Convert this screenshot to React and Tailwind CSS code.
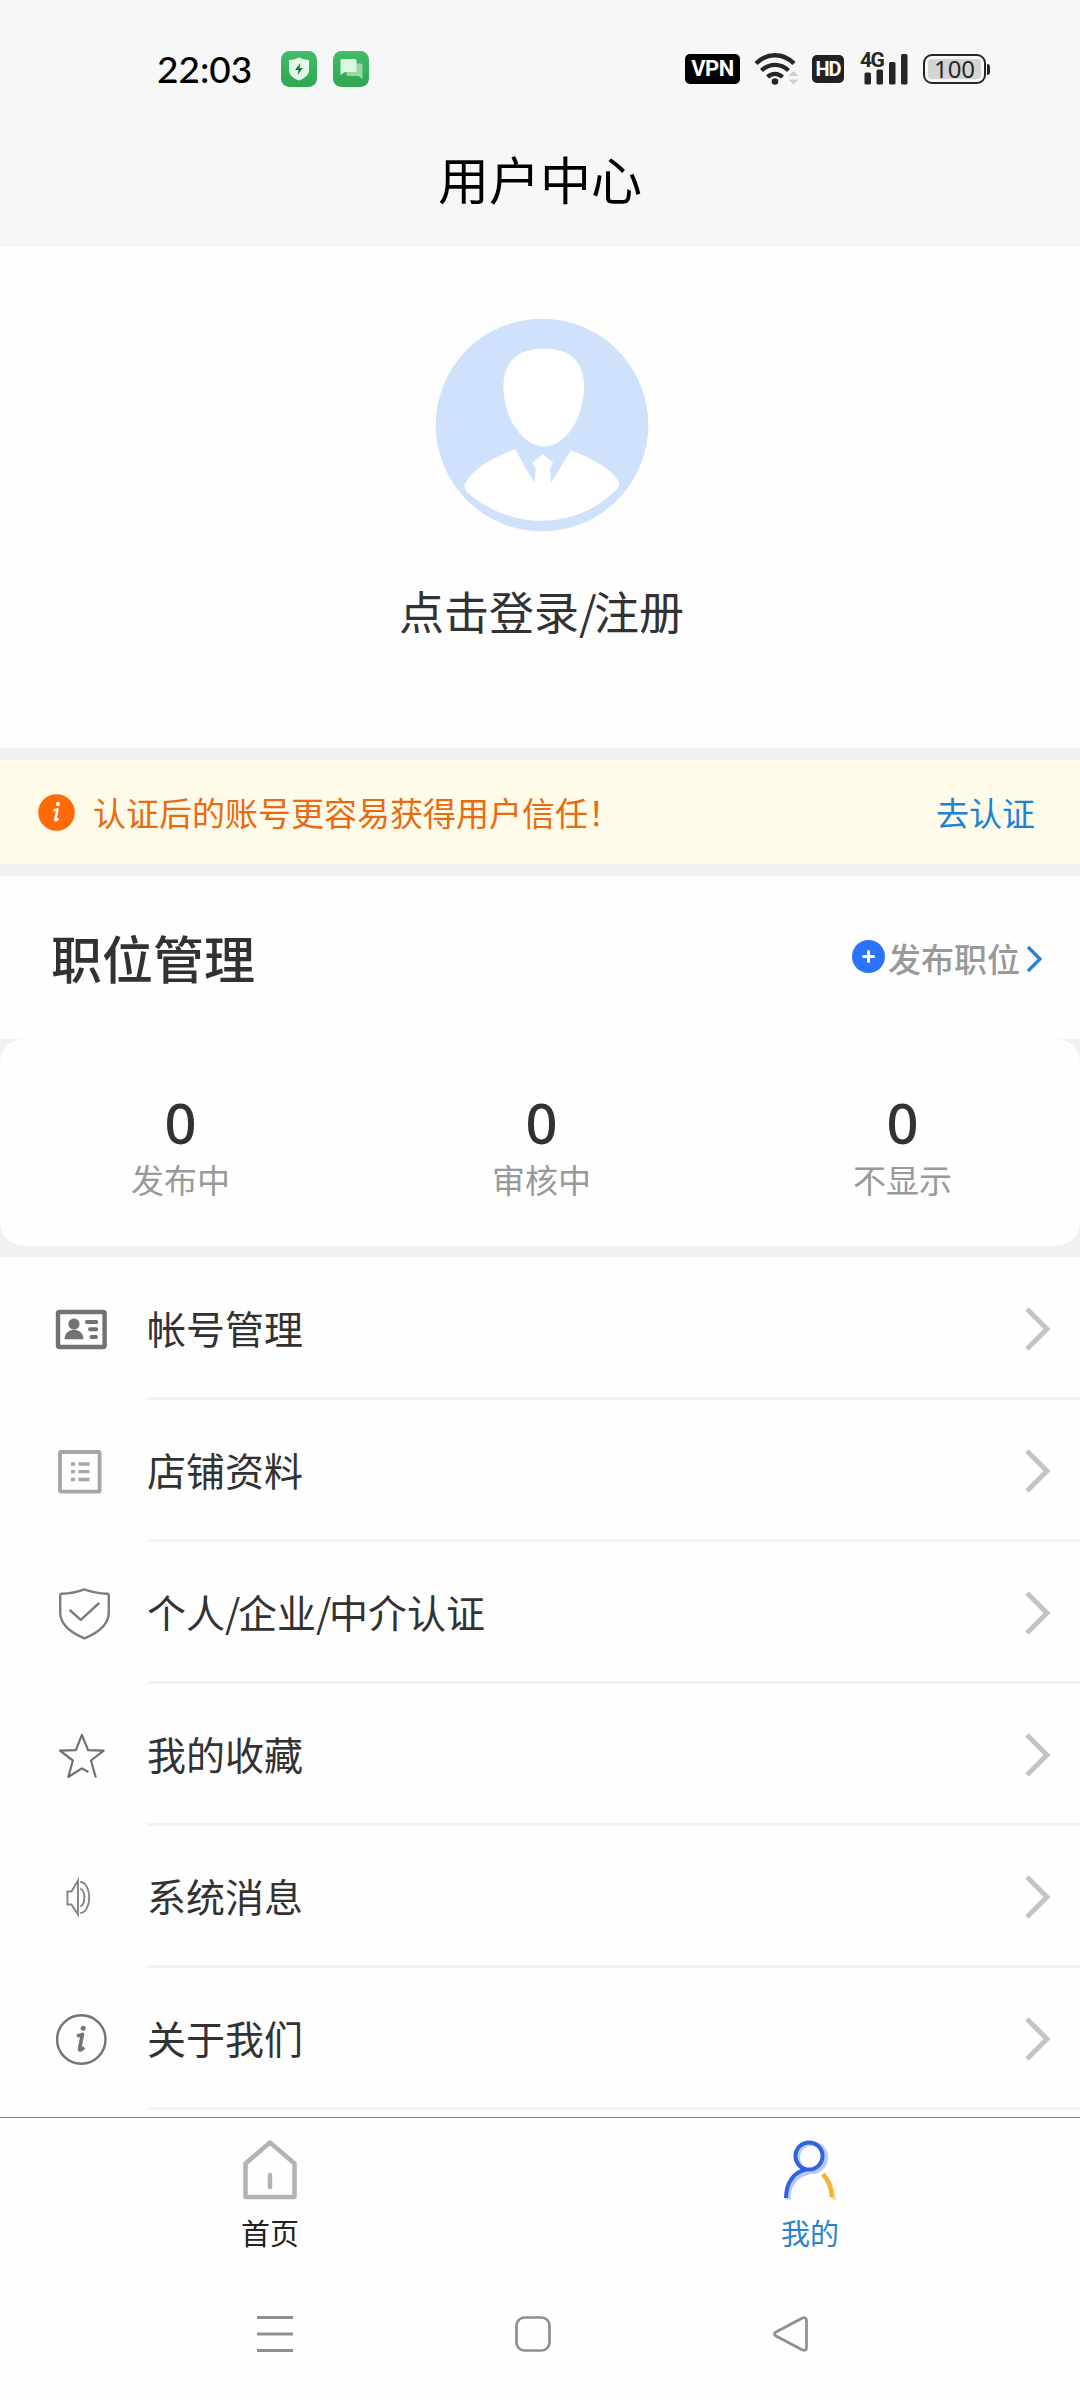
import { Fragment } from "react";

const menuItems = [
    { label: "帐号管理", icon: <AccountIcon /> },
    { label: "店铺资料", icon: <ShopIcon /> },
    { label: "个人/企业/中介认证", icon: <ShieldIcon /> },
    { label: "我的收藏", icon: <StarIcon /> },
    { label: "系统消息", icon: <SoundIcon /> },
    { label: "关于我们", icon: <AboutIcon /> },
];

const stats = [
    { label: "发布中", count: 0 },
    { label: "审核中", count: 0 },
    { label: "不显示", count: 0 },
];

function AccountIcon() {
    return (
        <svg width="84" height="60" viewBox="0 0 84 60" fill="none" className="text-[#727272]">
            <rect x="20" y="12" width="46.600" height="35" rx="1.500" stroke="currentColor" strokeWidth="4.400" />
            <circle cx="36" cy="24" r="5.600" fill="currentColor" />
            <path d="M26.500 39.300c0-5.500 4-9.500 9.500-9.500s9.500 4 9.500 9.500z" fill="currentColor" />
            <path d="M48.800 22h9.500M52 29.300h6.300M53.500 36.900h4.500" stroke="currentColor" strokeWidth="4" strokeLinecap="round" />
        </svg>
    );
}

function ShopIcon() {
    return (
        <svg width="84" height="60" viewBox="0 0 84 60" fill="none" stroke="#a6a6a6">
            <rect x="22" y="10" width="39.600" height="39.600" rx="1" strokeWidth="3.800" />
            <path d="M33 22h4M33 29.700h4M33 37.500h4M40.500 22h11M40.500 29.700h11M40.500 37.500h11" strokeWidth="3.300" />
        </svg>
    );
}

function ShieldIcon() {
    return (
        <svg width="84" height="60" viewBox="0 0 84 60" fill="none" stroke="#7c7c7c" strokeWidth="2.400" strokeLinecap="round" strokeLinejoin="round">
            <path d="M46.300 5.300c-7 2.600-14.500 4.100-22.700 4.500-1 .1-1.400.5-1.400 1.400v17c0 12.500 10 20.300 24.300 26.100 14.500-5.800 24.300-13.500 24.300-26v-17c0-.9-.4-1.400-1.300-1.500-8.200-.4-16.200-1.900-23.200-4.500z" />
            <path d="M32.300 26.500l10.500 9.300 17.800-16.300" />
        </svg>
    );
}

function StarIcon() {
    return (
        <svg width="84" height="60" viewBox="0 0 84 60" fill="none" stroke="#707070" strokeWidth="2.200" strokeLinejoin="round">
            <path d="M57.800 51.500l-4.800-17 12.700-9.800-15.600-.6-6.200-15.300-6 15.300-15.900.6 12.900 9.800-4.600 16.500 13.600-8.600 6.500 3.600" />
        </svg>
    );
}

function SoundIcon() {
    return (
        <svg width="84" height="60" viewBox="0 0 84 60" fill="none" stroke="#858585" strokeWidth="1.900">
            <path d="M40 12.500v34l-6.500-10h-4.100v-13h4.100z" />
            <path d="M42.200 14c5.500 0 9 7.200 9 15.500s-3.500 15.500-9 15.500" />
            <path d="M42.200 20.500c2.700 1.300 4.200 4.800 4.200 9s-1.500 7.700-4.200 9" />
        </svg>
    );
}

function AboutIcon() {
    return (
        <svg width="84" height="60" viewBox="0 0 84 60" fill="none" className="text-[#747474]">
            <circle cx="43.300" cy="29.500" r="24.200" stroke="currentColor" strokeWidth="2.400" />
            <circle cx="45.200" cy="18.200" r="2.500" fill="currentColor" />
            <path d="M39 26l5.500-1.600-3 14.500c-.4 1.700 1.700 1.300 4.500-1.700" stroke="currentColor" strokeWidth="3.600" strokeLinejoin="round" />
        </svg>
    );
}

// tightens the slashes between chinese words
const SlashText = ({ text, className }) => (
    <span className={className}>
        {text.split("/").map((part, i) => (
            <Fragment key={part}>
                {i > 0 && <span className="tracking-[-0.06em]">/</span>}
                {part}
            </Fragment>
        ))}
    </span>
);

const StatusBar = () => (
    <div className="flex h-[138px] items-start justify-between pt-[51px] pl-[157px] pr-[90px]">
        <div className="flex h-[36px] items-center">
            <span className="w-[124px] font-['Lato'] text-[37px] leading-[36px] font-medium text-black">22:03</span>
            <svg width="36" height="36" viewBox="0 0 36 36">
                <defs>
                    <linearGradient id="green" x1="0" y1="0" x2="0" y2="1">
                        <stop offset="0" stopColor="#43bd68" />
                        <stop offset="1" stopColor="#2fa650" />
                    </linearGradient>
                </defs>
                <rect width="36" height="36" rx="8.500" fill="url(#green)" />
                <path d="M18 6.500c3 1.600 6.200 2.300 10 2.500v10c0 5-4.500 8.500-10 10.500C12.500 27.500 8 24 8 19V9c3.800-.2 7-.9 10-2.500z" fill="#e3f9e9" />
                <path d="M19.500 12l-5.500 7h3.600l-1 5 5.400-7h-3.500z" fill="#28713c" />
            </svg>
            <svg width="36" height="36" viewBox="0 0 36 36" className="ml-4">
                <rect width="36" height="36" rx="8.500" fill="url(#green)" />
                <path d="M15 12.500h13a1.500 1.500 0 0 1 1.500 1.500v14l-4-3H15a1.500 1.500 0 0 1-1.500-1.500V14z" fill="#94d9a6" />
                <path d="M8.500 8H22a1.500 1.500 0 0 1 1.500 1.500v10A1.500 1.500 0 0 1 22 21H12l-4.500 3V9.500A1.500 1.500 0 0 1 8.500 8z" fill="#dcf8e2" />
            </svg>
        </div>
        <div className="flex h-[36px] items-center text-[#262626]">
            <span className="flex h-[30px] w-[55px] items-center justify-center rounded-[5px] bg-black font-['Roboto'] text-[22px] leading-none font-bold tracking-[-0.5px] text-white">
                VPN
            </span>
            <svg width="46" height="36" viewBox="0 0 46 36" fill="none" className="ml-[14px]">
                <path d="M2 12.500c11-11 27-11 38 0M7.500 19.500c8-7.500 19-7.500 27 0M13.500 26c4.500-4 10.500-4 15 0" stroke="currentColor" strokeWidth="4.300" />
                <circle cx="21" cy="30.500" r="3.300" fill="currentColor" />
                <path d="M34.500 25l5-5 5 5zM34.500 28.500l5 5 5-5z" fill="#cfcfcf" />
            </svg>
            <span className="ml-3 flex h-[28px] w-[32px] items-center justify-center rounded-[5px] bg-[#222] font-['Roboto'] text-[20px] leading-none font-bold tracking-[-1px] text-white">
                HD
            </span>
            <div className="relative ml-[17px] h-[36px] w-[47px]">
                <span className="absolute top-0 left-[-1px] font-['Roboto'] text-[21px] leading-[18px] font-bold tracking-[-1.500px]">4G</span>
                <svg width="47" height="36" viewBox="0 0 47 36" fill="currentColor">
                    <rect x="3.500" y="21.500" width="6.500" height="12" rx="1.500" />
                    <rect x="15.500" y="18.500" width="6.500" height="15" rx="1.500" />
                    <rect x="28" y="11" width="6.500" height="22.500" rx="1.500" />
                    <rect x="40" y="3" width="6.500" height="30.500" rx="1.500" />
                </svg>
            </div>
            <div className="ml-[15px] flex items-center">
                <span className="flex h-[30px] w-[63px] rounded-[9px] border-[2.500px] border-[#262626] p-[3px]">
                    <span className="flex flex-1 items-center justify-center rounded-[4px] bg-[#d4d4d4] font-['Noto_Sans'] text-[24px] leading-none">
                        100
                    </span>
                </span>
                <span className="ml-px h-[11px] w-[3px] rounded-r bg-[#262626]" />
            </div>
        </div>
    </div>
);

const Avatar = () => (
    <svg width="214" height="214" viewBox="0 0 214 214" className="ml-[3px]">
        <circle cx="107" cy="107" r="106.300" fill="#d0e1fb" />
        <path d="M109 30.500c27 0 40 14 40 38 0 32-19 60-40 60S68.500 100.500 68.500 68.500c0-24 13.500-38 40.500-38z" fill="#fff" />
        <path d="M80 131l19 34 2-14-4-6 11-9 10 9-3 6 1 14 20-33c24 10 43 20 48 33 1 4-3 7-6 10-40 37-102 37-145 0-3-3-4-6-3-9 7-15 27-26 50-35z" fill="#fff" />
    </svg>
);

const TabBar = () => (
    <div className="grid h-[160px] grid-cols-2 border-t border-[#8c8c8c] text-[29px] leading-[36px]">
        <div className="flex flex-col items-center pt-[20px] text-[#222]">
            <svg width="60" height="64" viewBox="0 0 60 64" fill="none" stroke="#b3b3b3" strokeWidth="4.500" strokeLinejoin="round" strokeLinecap="round">
                <path d="M30 4.500L5.500 25.500v33.500h49v-33.500z" />
                <path d="M30 37v12" />
            </svg>
            <span className="mt-[12px]">首页</span>
        </div>
        <div className="flex flex-col items-center pt-[20px] text-[#2b84cb]">
            <svg width="60" height="64" viewBox="0 0 60 64" fill="none">
                <g stroke="#b7c9fb" strokeWidth="5">
                    <circle cx="31.500" cy="19.500" r="14" />
                    <path d="M8 61.500c0-15 8-25 21-27.500" />
                </g>
                <path d="M44.500 37c6 7 9 15 10 25" stroke="#fbe3a8" strokeWidth="4" />
                <g stroke="#2f63e0" strokeWidth="4">
                    <circle cx="29" cy="18" r="13.500" />
                    <path d="M6 60c0-15 7.500-26 20-28.500" />
                </g>
                <path d="M43 36c5 6 8.500 14 9 23.500" stroke="#efb636" strokeWidth="4.300" />
            </svg>
            <span className="mt-[12px]">我的</span>
        </div>
    </div>
);

const SystemNav = () => (
    <div className="flex justify-between pt-[38px] pr-[271px] pl-[257px]">
        <svg width="36" height="38" viewBox="0 0 36 38" stroke="#8f8f8f" strokeWidth="3">
            <path d="M0 2.500h36M0 19h36M0 35.500h36" />
        </svg>
        <svg width="36" height="38" viewBox="0 0 36 38" fill="none" stroke="#8f8f8f" strokeWidth="2.700">
            <rect x="1.500" y="2.500" width="33" height="33" rx="8" />
        </svg>
        <svg width="36" height="38" viewBox="0 0 36 38" fill="none" stroke="#8f8f8f" strokeWidth="2.700" strokeLinejoin="round">
            <path d="M2.500 17.200L29 3.200Q33.500 1.500 33.500 5.500V32.500Q33.500 36.500 29 34.800L2.500 20.800Q.5 19 2.500 17.200z" />
        </svg>
    </div>
);

const App = () => {
    return (
        <div className="flex h-[2400px] w-[1080px] flex-col overflow-hidden bg-[#fefefe] font-['Noto_Sans_CJK_SC',sans-serif] text-[#323233]">
            <header className="h-[247px] bg-[#f7f7f7]">
                <StatusBar />
                <h1 className="text-center text-[51px] leading-[80px] text-black">用户中心</h1>
            </header>

            <section className="flex h-[501px] flex-col items-center pt-[71px]">
                <Avatar />
                <div className="mt-[45px] ml-[3px] text-[45px] leading-[68px]">
                    <SlashText text="点击登录/注册" />
                </div>
            </section>

            <div className="h-3 bg-[#f1f1f1]" />
            <div className="flex h-[104px] items-center bg-[#fefbe8] pr-[45px] pl-[38px] text-[33px] text-[#e96a10]">
                <svg width="37" height="37" viewBox="0 0 37 37" fill="none">
                    <circle cx="18.500" cy="18.500" r="18.300" fill="#ff6a08" />
                    <circle cx="20" cy="10" r="2.200" fill="#fff" />
                    <path d="M15.500 16.500l4-1-2.200 10c-.2 1.200 1.200 1 3-1" stroke="#fff" strokeWidth="2.500" strokeLinejoin="round" />
                </svg>
                <span className="mt-px ml-[18px] flex-1">认证后的账号更容易获得用户信任！</span>
                <span className="mt-px text-[#1c82d6]">去认证</span>
            </div>
            <div className="h-3 bg-[#f1f1f1]" />

            <div className="flex h-[163px] items-center justify-between pr-[37px] pl-[51px]">
                <h2 className="text-[51px] leading-none font-medium">职位管理</h2>
                <div className="mt-[2px] flex items-center text-[33px] font-medium text-[#999]">
                    <svg width="33" height="33" viewBox="0 0 33 33" className="-mt-[4px] mr-[3px]">
                        <circle cx="16.500" cy="16.500" r="16.500" fill="#2b73fb" />
                        <path d="M16.500 11.500v10M11.500 16.500h10" stroke="#fff" strokeWidth="3" strokeLinecap="round" />
                    </svg>
                    发布职位
                    <svg width="18" height="28" viewBox="0 0 18 28" fill="none" className="ml-[5px]">
                        <path d="M3 2l12 12L3 26" stroke="#2383d0" strokeWidth="3.300" />
                    </svg>
                </div>
            </div>

            <div className="bg-[#f1f1f1] pb-[11px]">
                <div className="grid h-[207px] grid-cols-[361px_361px_361px] rounded-[24px] bg-[#fefefe] pt-[56px] text-center">
                    {stats.map((item) => (
                        <div key={item.label}>
                            <div className="font-['Noto_Sans'] text-[56px] leading-[54px] font-medium">{item.count}</div>
                            <div className="text-[33px] leading-[60px] text-[#999]">{item.label}</div>
                        </div>
                    ))}
                </div>
            </div>

            <ul className="h-[860px] overflow-hidden pt-px">
                {menuItems.map((item) => (
                    <li key={item.label} className="flex h-[142px] items-stretch">
                        <span className="flex w-[147px] items-center pt-px pl-[38px]">{item.icon}</span>
                        <span className="flex flex-1 items-center justify-between border-b-3 border-[#f3f3f3] pt-[3px] pr-[28px] text-[39px]">
                            <SlashText text={item.label} className="-mt-[3px]" />
                            <svg width="28" height="46" viewBox="0 0 28 46" fill="none">
                                <path d="M3 3l20 20L3 43" stroke="#c4c4c4" strokeWidth="5" />
                            </svg>
                        </span>
                    </li>
                ))}
            </ul>

            <TabBar />
            <SystemNav />
        </div>
    );
};

export default App;
